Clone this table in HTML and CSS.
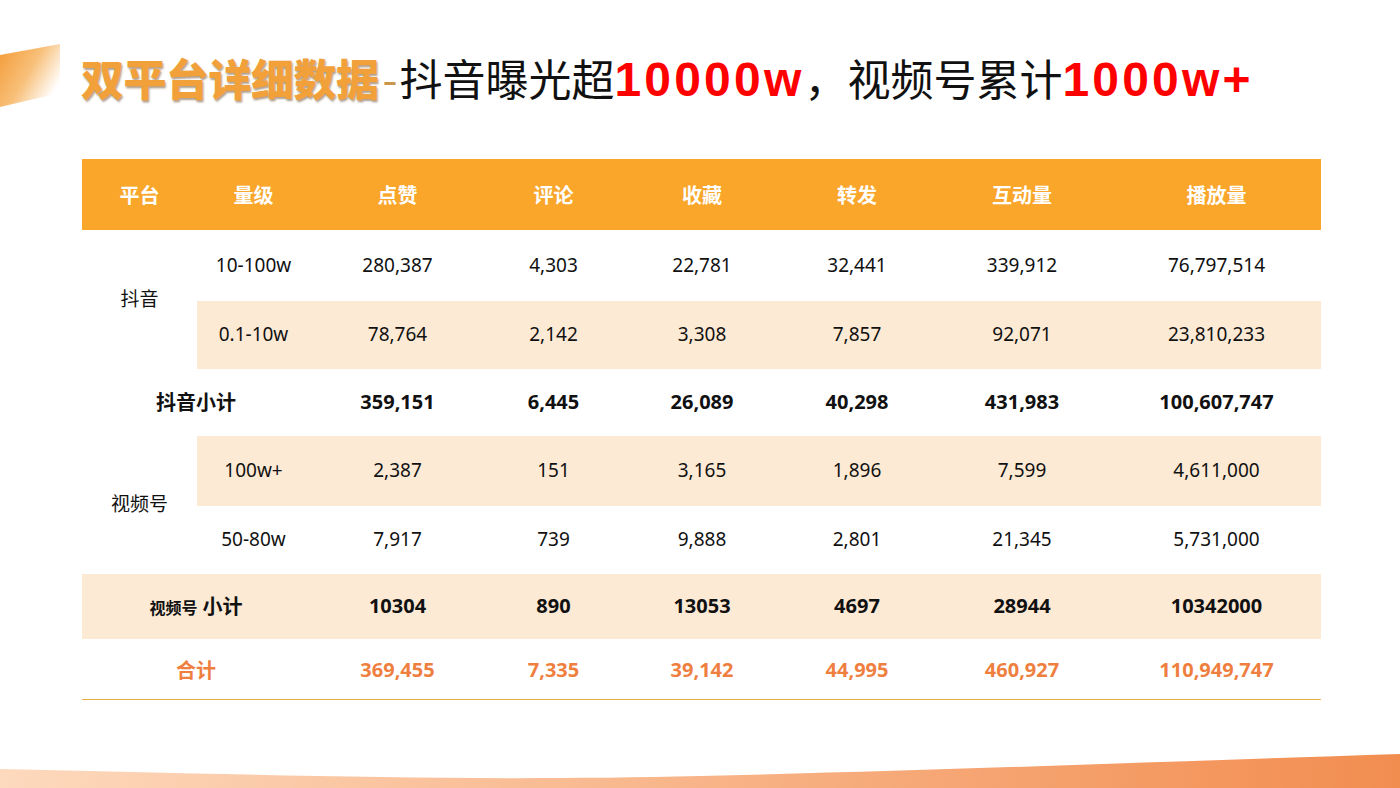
FILE: index.html
```html
<!DOCTYPE html>
<html lang="zh">
<head>
<meta charset="utf-8">
<link rel="stylesheet" href="styles.css">
</head>
<body>
<div class="slide">
  <svg class="corner" width="62" height="66" viewBox="0 0 62 66">
    <defs>
      <linearGradient id="cg" x1="0" y1="0" x2="1" y2="0.6">
        <stop offset="0" stop-color="#f39a35"/>
        <stop offset="0.55" stop-color="#f8c07a"/>
        <stop offset="1" stop-color="#ffffff"/>
      </linearGradient>
    </defs>
    <polygon points="0,11 60,0 60,49 0,63" fill="url(#cg)"/>
  </svg>

  <h1 class="title"><span class="t-orange">双平台详细数据</span><span class="t-dash">-</span>抖音曝光超<span class="t-red">10000w</span>，视频号累计<span class="t-red">1000w+</span></h1>

  <table class="data">
    <thead>
      <tr class="head">
        <th class="c1">平台</th><th class="c2">量级</th><th class="c3">点赞</th><th class="c4">评论</th><th class="c5">收藏</th><th class="c6">转发</th><th class="c7">互动量</th><th class="c8">播放量</th>
      </tr>
    </thead>
    <tbody>
      <tr class="r1">
        <td rowspan="2" class="plat">抖音</td>
        <td>10-100w</td><td>280,387</td><td>4,303</td><td>22,781</td><td>32,441</td><td>339,912</td><td>76,797,514</td>
      </tr>
      <tr class="r2 beige">
        <td>0.1-10w</td><td>78,764</td><td>2,142</td><td>3,308</td><td>7,857</td><td>92,071</td><td>23,810,233</td>
      </tr>
      <tr class="r3 sub">
        <td colspan="2" class="subname">抖音小计</td><td>359,151</td><td>6,445</td><td>26,089</td><td>40,298</td><td>431,983</td><td>100,607,747</td>
      </tr>
      <tr class="r4 beige">
        <td rowspan="2" class="plat">视频号</td>
        <td>100w+</td><td>2,387</td><td>151</td><td>3,165</td><td>1,896</td><td>7,599</td><td>4,611,000</td>
      </tr>
      <tr class="r5">
        <td>50-80w</td><td>7,917</td><td>739</td><td>9,888</td><td>2,801</td><td>21,345</td><td>5,731,000</td>
      </tr>
      <tr class="r6 sub beige">
        <td colspan="2" class="subname"><span class="small">视频号</span> 小计</td><td>10304</td><td>890</td><td>13053</td><td>4697</td><td>28944</td><td>10342000</td>
      </tr>
      <tr class="r7 total">
        <td colspan="2">合计</td><td>369,455</td><td>7,335</td><td>39,142</td><td>44,995</td><td>460,927</td><td>110,949,747</td>
      </tr>
    </tbody>
  </table>
  <div class="rule"></div>

  <svg class="wave" width="1400" height="36" viewBox="0 0 1400 36" preserveAspectRatio="none">
    <defs>
      <linearGradient id="wg" x1="0" y1="0" x2="1" y2="0">
        <stop offset="0" stop-color="#fdd9bd"/>
        <stop offset="0.5" stop-color="#f8b488"/>
        <stop offset="1" stop-color="#f28d50"/>
      </linearGradient>
    </defs>
    <path d="M0,17 C250,22 450,30 700,24 C950,18 1150,10 1400,2 L1400,36 L0,36 Z" fill="url(#wg)"/>
  </svg>
</div>
</body>
</html>
```
FILE: styles.css
```css
* { box-sizing: border-box; }
html, body { margin: 0; padding: 0; background: #ffffff; }
body {
  font-family: "Noto Sans", "Noto Sans CJK SC", sans-serif;
  color: #111;
}
.slide {
  position: relative;
  width: 1400px;
  height: 788px;
  overflow: hidden;
  padding: 48px 0 0 81px;
}
.corner {
  position: absolute;
  left: 0;
  top: 44px;
}
.title {
  margin: 0;
  height: 58px;
  font-size: 43px;
  line-height: 58px;
  font-weight: 400;
  font-family: "Noto Sans CJK SC", "Noto Sans", sans-serif;
  color: #111;
  white-space: nowrap;
  letter-spacing: 0;
}
.t-orange {
  font-weight: 900;
  color: #f2a03a;
  text-shadow: 1px 2px 2px rgba(110, 80, 50, 0.55);
  letter-spacing: -0.5px;
}
.t-dash {
  color: #c9964a;
  font-weight: 400;
  margin: 0 2px 0 4px;
}
.t-red {
  color: #ff0000;
  font-weight: 700;
  font-family: "Liberation Sans", Arial, sans-serif;
  font-size: 48px;
  letter-spacing: 3.2px;
}
.data {
  margin-top: 53px;
  margin-left: 1px;
  width: 1239px;
  border-collapse: collapse;
  table-layout: fixed;
  font-size: 19px;
}
.data th, .data td {
  padding: 0;
  text-align: center;
  vertical-align: middle;
  white-space: nowrap;
}
.head th {
  background: #f9a62b;
  color: #ffffff;
  font-weight: 700;
  height: 71px;
  font-size: 20px;
}
.c1 { width: 115px; }
.c2 { width: 113px; }
.c3 { width: 175px; }
.c4 { width: 137px; }
.c5 { width: 160px; }
.c6 { width: 150px; }
.c7 { width: 180px; }
.c8 { width: 209px; }
.r1 td { height: 71px; padding-bottom: 2px; }
.r2 td { height: 68px; padding-bottom: 2px; }
.r3 td { height: 67px; padding-bottom: 2px; }
.r4 td { height: 70px; padding-bottom: 2px; }
.r5 td { height: 68px; padding-bottom: 2px; }
.r6 td { height: 65px; padding-bottom: 2px; }
.r7 td { height: 60px; }
.beige td { background: #fdead5; }
.data td.plat { background: #ffffff; font-size: 19px; padding-bottom: 4px; }
.sub td { font-weight: 700; font-size: 20px; }
.small { font-size: 16px; }
.total td {
  color: #ef7f3f;
  font-weight: 700;
  font-size: 20px;
}
.rule {
  margin-left: 1px;
  width: 1239px;
  height: 1px;
  background: #e9b04a;
}
.wave {
  position: absolute;
  left: 0;
  bottom: 0;
}
```
